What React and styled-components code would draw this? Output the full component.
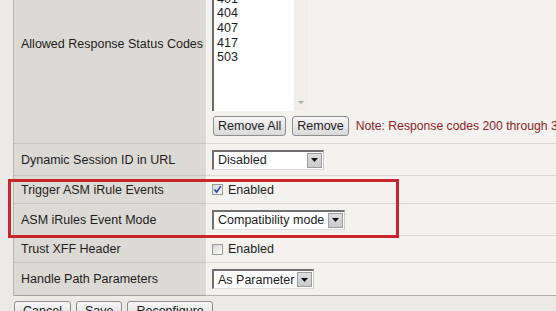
import React from 'react';
import styled, { createGlobalStyle } from 'styled-components';

const GlobalStyle = createGlobalStyle`
    html, body {
        margin: 0;
        padding: 0;
        background: #ebeae6;
        overflow: hidden;
    }
    body {
        font-family: "Liberation Sans", Arial, sans-serif;
        font-size: 12.5px;
        color: #1c1c1c;
    }
`;

const codes = ['400', '401', '404', '407', '417', '503'];

export default function App() {
    return (
        <Frame>
            <GlobalStyle />
            <Table>
                <Label>Allowed Response Status Codes</Label>
                <Value $stack $pad="5px 5px 7px">
                    <ListBox>
                        <ListItems>
                            {codes.map((c) => (
                                <div key={c}>{c}</div>
                            ))}
                        </ListItems>
                        <ScrollTrack>
                            <ScrollArrow />
                        </ScrollTrack>
                    </ListBox>
                    <ActionRow>
                        <Button $px={4}>Remove All</Button>
                        <Button $px={4}>Remove</Button>
                        <Note>Note: Response codes 200 through 399 are allowed by default.</Note>
                    </ActionRow>
                </Value>

                <Label $h={31}>Dynamic Session ID in URL</Label>
                <Value $h={31}>
                    <Select $w={112}>Disabled</Select>
                </Value>

                <Label $h={27}>Trigger ASM iRule Events</Label>
                <Value $h={27}>
                    <Check checked />
                </Value>

                <Label $h={31}>ASM iRules Event Mode</Label>
                <Value $h={31}>
                    <Select $w={133}>Compatibility mode</Select>
                </Value>

                <Label $h={26}>Trust XFF Header</Label>
                <Value $h={26}>
                    <Check />
                </Value>

                <Label $h={32} $last>Handle Path Parameters</Label>
                <Value $h={32} $last>
                    <Select $w={102}>As Parameter</Select>
                </Value>
            </Table>

            <Footer>
                <Button $px={8}>Cancel</Button>
                <Button $px={8}>Save</Button>
                <Button $px={8}>Reconfigure</Button>
            </Footer>

            <Highlight />
        </Frame>
    );
}

const Select = ({ $w, children }) => (
    <SelectBox $w={$w}>
        <span>{children}</span>
        <DropButton>
            <svg width="7" height="4" viewBox="0 0 7 4">
                <path d="M0 0h7L3.5 4z" fill="#111" />
            </svg>
        </DropButton>
    </SelectBox>
);

const Check = ({ checked }) => (
    <CheckWrap>
        <CheckBox>
            {checked && (
                <svg width="9" height="9" viewBox="0 0 9 9">
                    <path d="M1.5 4.5 L3.6 7 L7.8 1.2" stroke="#34509a" strokeWidth="1.7" fill="none" />
                </svg>
            )}
        </CheckBox>
        Enabled
    </CheckWrap>
);

const Frame = styled.div`
    position: relative;
    width: 556px;
    height: 311px;
    overflow: hidden;
`;

const Table = styled.div`
    display: grid;
    grid-template-columns: 193px 1fr;
    width: 700px;
    margin: -55px 0 0 13px;
    border-left: 1px solid #b6b4af;
`;

const Label = styled.div`
    display: flex;
    align-items: center;
    box-sizing: border-box;
    min-height: ${(p) => (p.$h ? `${p.$h + 1}px` : 'auto')};
    padding: 0 7px;
    background: #dcdad5;
    border-right: 1px solid #f7f6f4;
    border-bottom: 1px solid ${(p) => (p.$last ? '#a5a39f' : '#c7c5c0')};
    white-space: nowrap;
`;

const Value = styled.div`
    display: flex;
    flex-direction: ${(p) => (p.$stack ? 'column' : 'row')};
    align-items: ${(p) => (p.$stack ? 'flex-start' : 'center')};
    box-sizing: border-box;
    min-height: ${(p) => (p.$h ? `${p.$h + 1}px` : 'auto')};
    padding: ${(p) => p.$pad || '0 5px'};
    background: #f3f2ef;
    border-bottom: 1px solid ${(p) => (p.$last ? '#b3b1ac' : '#dad8d3')};
`;

const ListBox = styled.div`
    display: flex;
    width: 96px;
    height: 161px;
    box-sizing: border-box;
    border-left: 2px solid #6a6a6a;
    border-top: 2px solid #6a6a6a;
    background: #fff;
`;

const ListItems = styled.div`
    flex: 1;
    padding: 25px 0 0 3px;
    line-height: 14.67px;
`;

const ScrollTrack = styled.div`
    display: flex;
    align-items: flex-end;
    justify-content: center;
    width: 14px;
    padding-bottom: 7px;
    box-sizing: border-box;
    background: #efeeeb;
`;

const ScrollArrow = styled.div`
    width: 0;
    height: 0;
    border-left: 3px solid transparent;
    border-right: 3px solid transparent;
    border-top: 3px solid #a9a9a9;
`;

const ActionRow = styled.div`
    display: flex;
    align-items: center;
    gap: 6px;
    margin-top: 5px;
    margin-left: 1px;
    white-space: nowrap;
`;

const Button = styled.button`
    height: 20px;
    padding: 0 ${(p) => p.$px}px;
    border: 1px solid #8e8e8e;
    border-radius: 3px;
    background: linear-gradient(#f6f6f6, #dadada);
    font-family: inherit;
    font-size: 12.5px;
    color: #1c1c1c;
    line-height: 18px;
`;

const Note = styled.span`
    margin-left: 1px;
    font-size: 12.2px;
    color: #8c1d26;
`;

const SelectBox = styled.div`
    display: flex;
    align-items: center;
    justify-content: space-between;
    box-sizing: border-box;
    width: ${(p) => p.$w}px;
    height: 20px;
    padding: 0 1px 0 4px;
    background: #fff;
    border-top: 2px solid #707070;
    border-left: 2px solid #707070;
    border-right: 1px solid #c9c9c9;
    border-bottom: 1px solid #dedede;
    white-space: nowrap;
`;

const DropButton = styled.div`
    display: flex;
    align-items: center;
    justify-content: center;
    box-sizing: border-box;
    width: 15px;
    height: 15px;
    background: linear-gradient(#dedede, #cbcbcb);
    border: 1px solid #9d9d9d;
`;

const CheckWrap = styled.label`
    display: flex;
    align-items: center;
    gap: 5px;
`;

const CheckBox = styled.span`
    display: flex;
    align-items: center;
    justify-content: center;
    box-sizing: border-box;
    width: 11px;
    height: 11px;
    border: 1px solid #9a9a9a;
    background: linear-gradient(135deg, #d6d6d6, #fbfbfb);
`;

const Footer = styled.div`
    display: flex;
    gap: 5px;
    margin: 5px 0 0 14px;
`;

const Highlight = styled.div`
    position: absolute;
    left: 8px;
    top: 179px;
    width: 391px;
    height: 59px;
    box-sizing: border-box;
    border: 3px solid #c9252f;
    pointer-events: none;
`;
